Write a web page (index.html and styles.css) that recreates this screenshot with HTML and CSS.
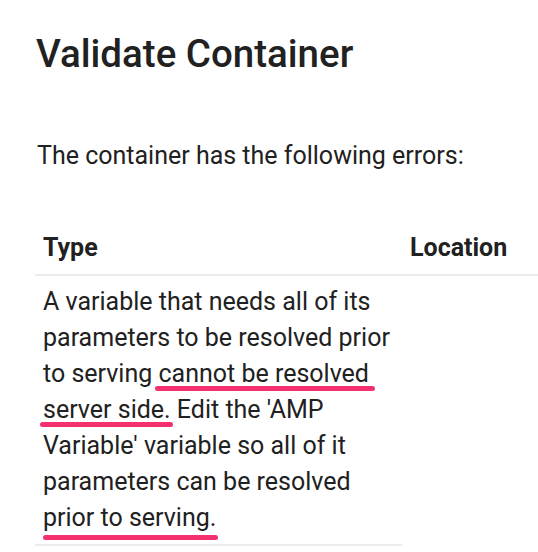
FILE: index.html
```html
<!DOCTYPE html>
<html lang="en">
<head>
<meta charset="utf-8">
<title>Validate Container</title>
<link rel="stylesheet" href="styles.css">
</head>
<body>
<main class="page">
  <h1 class="title">Validate Container</h1>
  <p class="intro">The container has the following errors:</p>
  <table class="errors">
    <thead>
      <tr>
        <th class="col-type">Type</th>
        <th class="col-loc">Location</th>
      </tr>
    </thead>
    <tbody>
      <tr>
        <td class="cell-type">A variable that needs all of its parameters to be resolved prior to serving <span class="mark mark-a">cannot be resolved</span> <span class="mark mark-b">server side.</span> Edit the 'AMP Variable' variable so all of it parameters can be resolved <span class="mark mark-c">prior to serving.</span></td>
        <td class="cell-loc"></td>
      </tr>
    </tbody>
  </table>
</main>
</body>
</html>
```
FILE: styles.css
```css
html, body {
  margin: 0;
  padding: 0;
  background: #ffffff;
  overflow: hidden;
}

body {
  font-family: Roboto, "Liberation Sans", sans-serif;
  color: #212121;
}

.page {
  padding: 31px 0 0 36px;
}

.title {
  margin: 0;
  font-size: 38.5px;
  line-height: 1.2;
  font-weight: 500;
}

.intro {
  margin: 61px 0 0 1px;
  font-size: 25px;
  line-height: 36px;
}

.errors {
  margin: 48px 0 0 -1px;
  width: calc(100% + 1px);
  border-collapse: collapse;
  font-size: 25px;
  line-height: 36px;
}

.errors th {
  text-align: left;
  font-weight: 700;
  padding: 8px 8px;
  border-bottom: 2px solid #ececec;
}

.errors td {
  vertical-align: top;
  padding: 8px 8px;
}

.col-type,
.cell-type {
  width: 351px;
}

.cell-type {
  border-bottom: 2px solid #ececec;
}

.mark {
  position: relative;
}

.mark-c {
  white-space: nowrap;
}

.mark::after {
  content: "";
  position: absolute;
  height: 5px;
  border-radius: 3px;
  background: #f5306e;
}

.mark-a::after {
  left: -3px;
  right: -6px;
  bottom: -3px;
}

.mark-b::after {
  left: -3px;
  right: -2px;
  bottom: -3px;
}

.mark-c::after {
  left: 0;
  right: -2px;
  bottom: -8px;
}
```
